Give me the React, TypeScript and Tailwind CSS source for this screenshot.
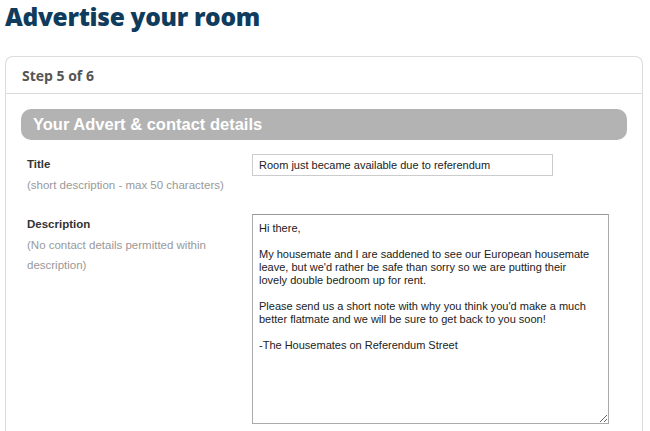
import React from 'react';

const description = `Hi there,

My housemate and I are saddened to see our European housemate leave, but we'd rather be safe than sorry so we are putting their lovely double bedroom up for rent.

Please send us a short note with why you think you'd make a much better flatmate and we will be sure to get back to you soon!

-The Housemates on Referendum Street`;

const App: React.FC = () => {
  return (
    <div className="w-[650px] h-[431px] overflow-hidden bg-white px-[5px]">
      <h1 className="pt-[1px] text-[24.5px] leading-[32px] font-extrabold text-[#0f3c5d] font-['Open_Sans',sans-serif] tracking-[-0.3px]">
        Advertise your room
      </h1>

      <div className="mt-[23px] w-[638px] rounded-t-[8px] border border-b-0 border-[#dcdcdc] h-[400px]">
        <div className="h-[37px] border-b border-[#dcdcdc] px-[16px] flex items-center">
          <h2 className="text-[14px] font-bold text-[#555] font-['Open_Sans',sans-serif]">Step 5 of 6</h2>
        </div>

        <div className="px-[15px] pt-[15px] font-['Liberation_Sans',Arial,sans-serif]">
          <div className="h-[31px] w-[606px] rounded-[10px] bg-[#b3b3b3] flex items-center px-[12px]">
            <span className="text-[16.5px] font-bold text-white">Your Advert &amp; contact details</span>
          </div>

          <div className="mt-[14px] flex">
            <div className="w-[231px] pl-[6px] pt-[2px]">
              <div className="text-[11.5px] leading-[16px] font-bold text-[#333]">Title</div>
              <div className="mt-[3px] text-[11.5px] leading-[20px] text-[#999]">(short description - max 50 characters)</div>
            </div>
            <input
              readOnly
              value="Room just became available due to referendum"
              className="h-[22px] w-[301px] border border-[#ccc] px-[6px] text-[11px] text-[#222] outline-none"
            />
          </div>

          <div className="mt-[19px] flex">
            <div className="w-[231px] pl-[6px] pt-[2px]">
              <div className="text-[11.5px] leading-[16px] font-bold text-[#333]">Description</div>
              <div className="mt-[3px] text-[11.5px] leading-[20px] text-[#999] w-[200px]">(No contact details permitted within description)</div>
            </div>
            <textarea
              readOnly
              value={description}
              className="h-[210px] w-[357px] border border-[#aaa] border-t-[#999] pl-[6px] pr-[14px] pt-[7px] text-[11px] leading-[13px] text-[#222] outline-none resize-y"
            />
          </div>
        </div>
      </div>
    </div>
  );
};

export default App;
